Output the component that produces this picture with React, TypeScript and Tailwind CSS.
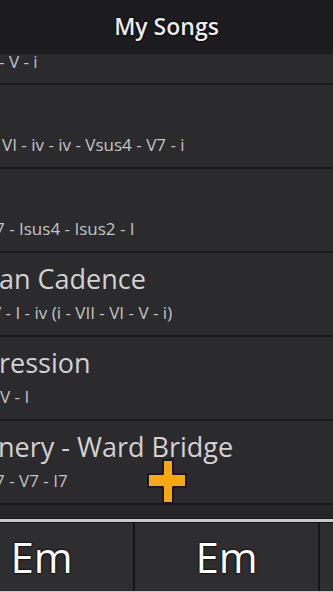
import React from "react";

interface Song {
  title: string;
  titleShift: number;
  chords: string;
  chordShift: number;
}

const songs: Song[] = [
  { title: "", titleShift: 0, chords: "VI - iv - iv - Vsus4 - V7 - i", chordShift: 2 },
  { title: "", titleShift: 0, chords: "7 - Isus4 - Isus2 - I", chordShift: -5 },
  { title: "an Cadence", titleShift: -1, chords: "V - I - iv (i - VII - VI - V - i)", chordShift: -9 },
  { title: "ression", titleShift: -1, chords: "V - I", chordShift: 0 },
  { title: "nery - Ward Bridge", titleShift: -2, chords: "7 - V7 - I7", chordShift: -5 },
];

function SongRow({ song }: { song: Song }) {
  return (
    <div className="h-[82px] bg-[#2b2a2c] flex flex-col overflow-hidden whitespace-nowrap">
      <div
        className="h-[50px] pt-[8px] text-[27px] leading-[36px] text-[#d2d2d2]"
        style={{ marginLeft: song.titleShift }}
      >
        {song.title}
      </div>
      <div
        className="text-[17px] leading-[20px] text-[#c4c4c4]"
        style={{ marginLeft: song.chordShift }}
      >
        {song.chords}
      </div>
    </div>
  );
}

function ChordCell({ label }: { label: string }) {
  return (
    <div className="w-[185px] shrink-0 h-full flex items-center justify-center border-r-2 border-[#161517]">
      <span
        className="text-[42px] font-medium text-white leading-none"
        style={{ textShadow: "0 0 2px #000, 0 0 2px #000" }}
      >
        {label}
      </span>
    </div>
  );
}

export default function App() {
  return (
    <div className="relative w-[333px] h-[592px] overflow-hidden bg-[#1c1b1d] flex flex-col font-['Open_Sans','Noto_Sans',sans-serif]">
      {/* Header */}
      <div className="h-[53px] shrink-0 flex items-center justify-center bg-[#1c1b1d]">
        <span
          className="text-[23px] font-semibold text-[#ececec]"
          style={{ textShadow: "0 0 2px #000, 0 0 2px #000" }}
        >
          My Songs
        </span>
      </div>

      {/* List */}
      <div className="flex flex-col gap-[2px] bg-[#1b1a1c] pt-[1px]">
        <div className="h-[29px] bg-[#2b2a2c] overflow-hidden whitespace-nowrap">
          <div className="text-[17px] leading-[16px] text-[#c4c4c4] ml-[-1px]">- V - i</div>
        </div>
        {songs.map((s, i) => (
          <SongRow key={i} song={s} />
        ))}
        <div className="h-[13px] bg-[#262527]" />
      </div>

      {/* Chord bar */}
      <div className="h-[3px] bg-[#c8c8c8] mt-[1px]" />
      <div className="h-[1px] bg-[#151416]" />
      <div className="h-[68px] bg-[#2e2d2f] flex ml-[-50px]">
        <ChordCell label="Em" />
        <ChordCell label="Em" />
        <ChordCell label="" />
      </div>
      <div className="flex-1 bg-[#c8c8c8]" />

      {/* Add button */}
      <svg
        className="absolute left-[146px] top-[458px]"
        width="42"
        height="47"
        viewBox="0 0 42 47"
      >
        <path
          d="M17 2h10v14h13v13H27v16H17V29H2V16h15z"
          fill="#f6a90f"
          stroke="#1b1633"
          strokeWidth="2"
          strokeLinejoin="round"
        />
      </svg>
    </div>
  );
}
